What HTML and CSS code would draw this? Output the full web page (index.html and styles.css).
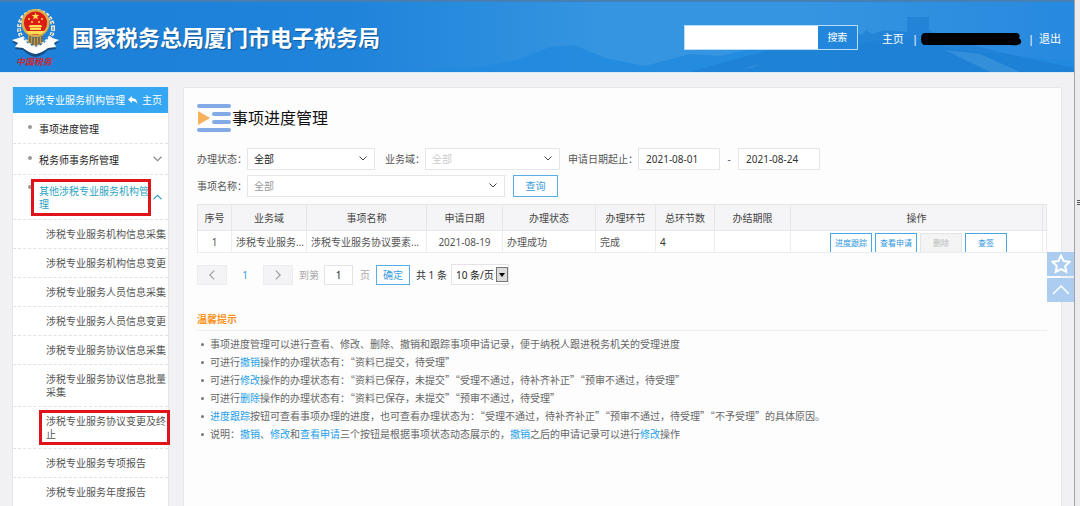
FILE: index.html
```html
<!DOCTYPE html>
<html lang="zh-CN">
<head>
<meta charset="utf-8">
<title>国家税务总局厦门市电子税务局</title>
<link rel="stylesheet" href="styles.css">
</head>
<body>
<div class="page">
  <div class="site">
    <header class="header">
      <svg class="scenery" viewBox="0 0 1074 70" preserveAspectRatio="none" aria-hidden="true">
        <path d="M400 70 L480 65 L520 57 L550 45 L574 43 L605 56 L645 64 L690 52 L720 54 L780 40 L830 48 L900 34 L960 48 L1074 60 V70Z" fill="#2189df" opacity=".8"/>
        <path d="M690 70 L780 45 L850 30 L862 33 L866 28 L872 32 L885 28 L907 30 V15 H929 V28 L945 36 L1000 50 L1074 66 V70Z" fill="#1a7cd0" opacity=".6"/>
        <path d="M945 48 L980 52 L1020 70 H990Z M745 66 L760 62 L752 66Z" fill="#69aee8" opacity=".3"/>
      </svg>
      <svg class="logo" viewBox="0 0 48 60" role="img" aria-label="中国税务">
        <circle cx="24" cy="21" r="17" fill="none" stroke="#f1eee0" stroke-width="4" stroke-dasharray="3 1.5"/>
        <circle cx="24" cy="21" r="17" fill="none" stroke="#39566a" stroke-width="1" stroke-dasharray="2 3"/>
        <circle cx="23.500" cy="16" r="14" fill="#d9b04c"/>
        <circle cx="23.500" cy="16" r="11.500" fill="#dc1a16"/>
        <path d="M23.500 5.500l1 2.600h2.800l-2.200 1.700.8 2.700-2.400-1.600-2.400 1.600.8-2.700-2.200-1.700h2.800z" fill="#ffdd55"/>
        <g fill="#ffdd55"><circle cx="17" cy="12" r="1"/><circle cx="20" cy="15" r="1"/><circle cx="27" cy="15" r="1"/><circle cx="30" cy="12" r="1"/>
        <path d="M18 18h11l1.500 2H16.500zM18 20.500h11v2.500H18zM14 24h19l-3 3H17z"/></g>
        <path d="M16 27 23.500 31 31 27V35L23.500 39 16 35Z" fill="#c79a3e"/>
        <path d="M18 29v7M21 30v8M24 30v8M27 30v8M30 29v6" stroke="#24466a" stroke-width="1"/>
        <path d="M0 34 10 31Q15 39 23.500 41 33 39 37 31L47 34 42 37 44 41 36 42Q30 48 23.500 49 17 48 11 42L3 41 6 37Z" fill="#174a7d" transform="translate(0 1)"/>
        <path d="M0 33 10 30Q15 38 23.500 40 33 38 37 30L47 33 42 36 44 40 36 41Q30 46 23.500 47 17 46 11 41L3 40 6 36Z" fill="#fff"/>
        <text class="logo-text" x="4" y="58">中国税务</text>
      </svg>
      <div class="brand">国家税务总局厦门市电子税务局</div>
      <form class="search">
        <input class="search-input" type="text" aria-label="搜索内容">
        <button class="search-btn" type="button">搜索</button>
      </form>
      <nav class="user-nav">
        <a href="#">主页</a>
        <span class="bar">|</span>
        <svg class="redacted" viewBox="0 0 102 14" aria-hidden="true"><path d="M4 1H97Q101 2 99 6 103 9 100 12 97 14 90 13H4Q1 12 1 7 1 2 4 1Z" fill="#000"/></svg>
        <span class="bar">|</span>
        <a href="#">退出</a>
      </nav>
    </header>

    <div class="body">
      <aside class="sidebar">
        <div class="side-head">
          <span>涉税专业服务机构管理</span>
          <a class="home" href="#"><svg class="reply" viewBox="0 0 10 8" aria-hidden="true"><path d="M0 3.500 4 0V2Q9 2 9.500 8 8 5 4 5V7Z" fill="#fff"/></svg>主页</a>
        </div>
        <ul class="menu">
          <li class="item"><a href="#">事项进度管理</a></li>
          <li class="item"><a href="#">税务师事务所管理</a><svg class="arrow" viewBox="0 0 8 5" aria-hidden="true"><path d="M.5.5 4 4 7.500.5"/></svg></li>
          <li class="item open"><a href="#">其他涉税专业服务机构管理</a><svg class="arrow" viewBox="0 0 8 5" aria-hidden="true"><path d="M.5 4.500 4 1 7.500 4.500"/></svg><span class="mark mark-group"></span></li>
        </ul>
        <ul class="menu">
          <li class="sub"><a href="#">涉税专业服务机构信息采集</a></li>
          <li class="sub"><a href="#">涉税专业服务机构信息变更</a></li>
          <li class="sub"><a href="#">涉税专业服务人员信息采集</a></li>
          <li class="sub"><a href="#">涉税专业服务人员信息变更</a></li>
          <li class="sub"><a href="#">涉税专业服务协议信息采集</a></li>
          <li class="sub"><a href="#">涉税专业服务协议信息批量采集</a></li>
          <li class="sub"><a href="#">涉税专业服务协议变更及终止</a><span class="mark mark-sub"></span></li>
          <li class="sub"><a href="#">涉税专业服务专项报告</a></li>
          <li class="sub"><a href="#">涉税专业服务年度报告</a></li>
        </ul>
      </aside>

      <main class="panel">
        <h1 class="title">
          <svg class="title-icon" viewBox="0 0 34 28" aria-hidden="true"><g fill="#82abe6"><rect x="0" y="0" width="34" height="4" rx="2"/><rect x="15" y="8" width="19" height="4" rx="2"/><rect x="15" y="16" width="19" height="4" rx="2"/><rect x="0" y="24" width="34" height="4" rx="2"/></g><path d="M1 7 13 14 1 21Z" fill="#f7b15c"/></svg>
          事项进度管理
        </h1>

        <form class="filters">
          <div class="row">
            <label class="label" for="status">办理状态：</label>
            <span class="pick pick-status"><select id="status" class="select"><option>全部</option></select><svg class="caret" viewBox="0 0 8 5" aria-hidden="true"><path d="M.5.5 4 4 7.500.5"/></svg></span>
            <label class="label label-field" for="field">业务域：</label>
            <span class="pick pick-field"><select id="field" class="select muted"><option>全部</option></select><svg class="caret" viewBox="0 0 8 5" aria-hidden="true"><path d="M.5.5 4 4 7.500.5"/></svg></span>
            <label class="label label-date" for="from">申请日期起止：</label>
            <input id="from" class="date" type="text" value="2021-08-01">
            <span class="dash">-</span>
            <input class="date" type="text" value="2021-08-24" aria-label="申请日期止">
          </div>
          <div class="row">
            <label class="label" for="matter">事项名称：</label>
            <span class="pick pick-matter"><select id="matter" class="select grey"><option>全部</option></select><svg class="caret" viewBox="0 0 8 5" aria-hidden="true"><path d="M.5.5 4 4 7.500.5"/></svg></span>
            <button class="query" type="button">查询</button>
          </div>
        </form>

        <table class="grid">
          <colgroup><col class="c1"><col class="c2"><col class="c3"><col class="c4"><col class="c5"><col class="c6"><col class="c7"><col class="c8"><col><col class="c10"></colgroup>
          <thead><tr><th>序号</th><th>业务域</th><th>事项名称</th><th>申请日期</th><th>办理状态</th><th>办理环节</th><th>总环节数</th><th>办结期限</th><th>操作</th><th></th></tr></thead>
          <tbody><tr>
            <td class="mid">1</td><td>涉税专业服务...</td><td>涉税专业服务协议要素...</td><td class="mid">2021-08-19</td><td>办理成功</td><td>完成</td><td class="num">4</td><td></td>
            <td class="ops-cell"><div class="ops"><button class="op" type="button">进度跟踪</button><button class="op" type="button">查看申请</button><button class="op off" type="button" disabled>删除</button><button class="op" type="button">查签</button></div></td><td></td>
          </tr></tbody>
        </table>

        <div class="pager">
          <button class="step" type="button" aria-label="上一页"><svg viewBox="0 0 5 9" aria-hidden="true"><path d="M4.500.5.5 4.500 4.500 8.500"/></svg></button>
          <a class="current" href="#">1</a>
          <button class="step" type="button" aria-label="下一页"><svg viewBox="0 0 5 9" aria-hidden="true"><path d="M.5.5 4.500 4.500.5 8.500"/></svg></button>
          <label class="faint to" for="goto">到第</label>
          <input id="goto" class="goto" type="text" value="1">
          <span class="faint unit">页</span>
          <button class="confirm" type="button">确定</button>
          <span class="total">共 1 条</span>
          <span class="size"><select class="size-select" aria-label="每页条数"><option>10 条/页</option></select><svg class="drop" viewBox="0 0 12 15" aria-hidden="true"><rect x=".5" y=".5" width="11" height="14" fill="#dcdcdc" stroke="#777"/><path d="M3 6h6L6 10Z" fill="#000"/></svg></span>
        </div>

        <section class="tips">
          <h2 class="tips-title">温馨提示</h2>
          <ul class="tips-list">
            <li>事项进度管理可以进行查看、修改、删除、撤销和跟踪事项申请记录，便于纳税人跟进税务机关的受理进度</li>
            <li>可进行<b>撤销</b>操作的办理状态有：“资料已提交，待受理”</li>
            <li>可进行<b>修改</b>操作的办理状态有：“资料已保存，未提交”“受理不通过，待补齐补正”“预审不通过，待受理”</li>
            <li>可进行<b>删除</b>操作的办理状态有：“资料已保存，未提交”“预审不通过，待受理”</li>
            <li><b>进度跟踪</b>按钮可查看事项办理的进度，也可查看办理状态为：“受理不通过，待补齐补正”“预审不通过，待受理”“不予受理”的具体原因。</li>
            <li>说明：<b>撤销</b>、<b>修改</b>和<b>查看申请</b>三个按钮是根据事项状态动态展示的，<b>撤销</b>之后的申请记录可以进行<b>修改</b>操作</li>
          </ul>
        </section>
      </main>
    </div>
    <div class="float">
      <button class="float-btn" type="button" aria-label="收藏"><svg viewBox="0 0 20 20" aria-hidden="true"><path d="M10 1.500 12.600 7l6 .8-4.400 4.200 1.100 6L10 15.200 4.700 18l1.100-6L1.400 7.800l6-.8Z" stroke-width="2"/></svg></button>
      <button class="float-btn" type="button" aria-label="返回顶部"><svg viewBox="0 0 20 20" aria-hidden="true"><path d="M2 14 10 6 18 14" stroke-width="1.500"/></svg></button>
    </div>
  </div>
  <div class="scroll"><span class="grip"></span></div>
</div>
</body>
</html>
```
FILE: styles.css
```css
* { box-sizing: border-box; }
body {
  margin: 0;
  background: #f1f1f3;
  color: #555;
  font: 10px/14px "Noto Sans", "Noto Sans CJK SC", sans-serif;
}
a { color: inherit; text-decoration: none; }
button, input, select { font: inherit; color: inherit; margin: 0; padding: 0; border-radius: 0; }
ul { list-style: none; margin: 0; padding: 0; }
svg { display: block; }

.page { display: flex; height: 100vh; overflow: hidden; }
.site { flex: 1; min-width: 0; position: relative; }
.scroll { width: 6px; border-left: 1px solid #a3a3a9; background: #ececef; padding-top: 200px; }
.grip { display: block; width: 3px; height: 6px; margin-left: 2px; background: repeating-linear-gradient(#555 0 1px, #ececef 1px 2px); }

/* header */
.header {
  position: relative;
  display: flex;
  align-items: center;
  height: 72px;
  padding: 0 13px 0 12px;
  border-top: 2px solid #467fb3;
  background: linear-gradient(90deg, #1d80d9 0%, #1f83da 32%, #3595e1 56%, #3595e1 75%, #2789df 100%);
  color: #fff;
}
.scenery { position: absolute; inset: 0; width: 100%; height: 100%; }
.logo { position: relative; width: 48px; height: 60px; }
.logo-text { font: italic bold 9px "Noto Sans CJK SC", sans-serif; fill: #c42834; }
.brand { position: relative; margin-left: 12px; font-size: 22px; line-height: 32px; font-weight: 700; white-space: nowrap; text-shadow: 1px 1px 1px #14599b; }
.search { position: relative; display: flex; height: 25px; margin-left: auto; border: 1px solid #b9dcf7; }
.search-input { width: 133px; border: 0; background: #fff; color: #333; }
.search-btn { width: 39px; border: 0; background: #2186dc; color: #fff; }
.user-nav { position: relative; display: flex; align-items: center; margin-left: 24px; padding-top: 3px; font-size: 11px; white-space: nowrap; }
.bar { margin: 0 2px 0 8px; }
.redacted { width: 102px; height: 14px; }
.redacted + .bar { margin: 0 5px 0 6px; }

/* columns */
.body { display: flex; align-items: flex-start; gap: 14px; padding: 14px 12px 0; border-top: 1px solid #d9ebf8; }
.sidebar { flex: none; width: 157px; border: 1px solid #e4e6ea; border-top: 0; background: #fff; }
.side-head { display: flex; justify-content: space-between; align-items: center; height: 26px; padding: 0 6px 0 12px; background: #35a6f2; color: #fff; white-space: nowrap; }
.home { display: flex; align-items: center; gap: 4px; }
.reply { width: 10px; height: 8px; }
.menu { color: #555; }
.item, .sub { position: relative; display: flex; align-items: center; border-bottom: 1px dashed #e2e2e2; }
.item { min-height: 31px; padding: 8px 18px 7px 26px; color: #222; }
.item::before { content: ""; position: absolute; left: 15px; top: 12px; width: 4px; height: 4px; border-radius: 50%; background: #999; }
.open { min-height: 45px; color: #2aa3c4; line-height: 13px; }
.open::before { top: 10px; }
.sub { min-height: 29px; padding: 8px 0 7px 33px; line-height: 13px; }
.arrow { position: absolute; right: 6px; top: 12px; width: 9px; height: 6px; fill: none; stroke: #888; }
.open .arrow { top: 19px; stroke: #3a9fc0; }
.mark { position: absolute; border: 3px solid #e0131a; }
.mark-group { inset: 4px 17px 3px 18px; }
.mark-sub { inset: 3px -2px 3px 26px; }

.panel { flex: 1; min-width: 0; min-height: 440px; padding: 14px 14px 0 13px; border: 1px solid #e6e7ea; background: #fdfdfe; }
.title { display: flex; align-items: center; height: 32px; margin: 0; font-size: 16px; line-height: 24px; font-weight: 400; color: #111; gap: 1px; }
.title-icon { width: 34px; height: 28px; }

/* filters */
.filters { display: flex; flex-direction: column; gap: 5px; margin-top: 14px; }
.row { display: flex; align-items: center; height: 22px; white-space: nowrap; }
.label { flex: none; width: 50px; }
.label-field { width: 40px; margin-left: 10px; }
.label-date { width: 70px; margin-left: 8px; }
.pick { position: relative; display: block; height: 22px; }
.pick-status { width: 128px; }
.pick-field { width: 135px; }
.pick-matter { width: 258px; }
.select { appearance: none; width: 100%; height: 100%; padding: 0 20px 0 6px; border: 1px solid #e6e6e8; background: #fff; color: #222; }
.muted { color: #ccc; }
.grey { color: #999; }
.caret { position: absolute; right: 8px; top: 8px; width: 8px; height: 5px; fill: none; stroke: #444; pointer-events: none; }
.date { width: 82px; height: 22px; padding: 0 7px; border: 1px solid #e6e6e8; background: #fff; color: #333; }
.dash { width: 18px; text-align: center; }
.query, .confirm { border: 1px solid #5aaee8; background: #fff; color: #3a9ce0; }
.query { width: 45px; height: 22px; margin-left: 8px; }

/* table */
.grid { width: 100%; margin-top: 7px; border-collapse: collapse; table-layout: fixed; border: 1px solid #e6e6e9; }
.grid th { height: 26px; padding: 0; border: 1px solid #e6e6e9; background: #f5f5f7; font-weight: 400; color: #444; }
.grid td { height: 22px; padding: 0 0 0 4px; border: 1px solid #ececef; background: #fff; overflow: hidden; white-space: nowrap; }
.grid .mid { padding: 0; text-align: center; }
.grid .num { color: #333; }
.c1 { width: 34px; }
.c2 { width: 75px; }
.c3 { width: 120px; }
.c4 { width: 76px; }
.c5 { width: 93px; }
.c6 { width: 60px; }
.c7 { width: 59px; }
.c8 { width: 76px; }
.c10 { width: 4px; }
.grid .ops-cell { padding: 0 0 0 4px; }
.ops { display: flex; justify-content: center; gap: 3px; height: 19px; margin-top: 2px; overflow: hidden; }
.op { width: 42px; height: 19px; border: 1px solid #4aa5e4; border-bottom: 0; background: #fff; color: #2f96dd; font-size: 8px; white-space: nowrap; }
.off { border-color: #e4e4e4; background: #f4f4f5; color: #bbb; }

/* pager */
.pager { display: flex; align-items: center; height: 21px; margin-top: 11px; white-space: nowrap; }
.step { display: flex; align-items: center; justify-content: center; width: 30px; height: 20px; border: 1px solid #ececee; background: #f4f4f6; }
.step svg { width: 6px; height: 10px; fill: none; stroke: #999; }
.current { width: 36px; text-align: center; color: #3a9ce0; }
.faint { color: #aaa; }
.to { margin-left: 6px; }
.goto { width: 29px; height: 20px; margin: 0 7px 0 5px; border: 1px solid #e4e4e6; background: #fff; color: #222; text-align: center; }
.confirm { width: 34px; height: 20px; margin: 0 6px 0 6px; }
.total { width: 35px; color: #333; }
.size { position: relative; display: block; }
.size-select { appearance: none; width: 58px; height: 21px; padding: 0 0 0 4px; border: 1px solid #e4e4e6; background: #fff; color: #222; }
.drop { position: absolute; right: 1px; top: 3px; width: 12px; height: 15px; pointer-events: none; }

/* tips */
.tips { margin-top: 27px; font-family: "Noto Sans CJK SC", sans-serif; }
.tips-title { margin: 0; padding-bottom: 4px; font-size: 10px; line-height: 14px; font-weight: 700; color: #f9941e; border-bottom: 1px solid #eee; }
.tips-list { padding: 4px 0 0 13px; line-height: 18px; color: #666; }
.tips-list li { position: relative; white-space: nowrap; }
.tips-list li::before { content: ""; position: absolute; left: -9px; top: 8px; width: 3px; height: 3px; border-radius: 50%; background: #777; }
.tips-list b { font-weight: 400; color: #1e9fea; }

/* shortcuts over the right edge */
.float { position: absolute; right: 0; top: 252px; display: flex; flex-direction: column; gap: 2px; }
.float-btn { display: flex; align-items: center; justify-content: center; width: 27px; height: 24px; border: 0; background: #accdf0; }
.float-btn svg { width: 20px; height: 20px; fill: none; stroke: #fff; }
```
